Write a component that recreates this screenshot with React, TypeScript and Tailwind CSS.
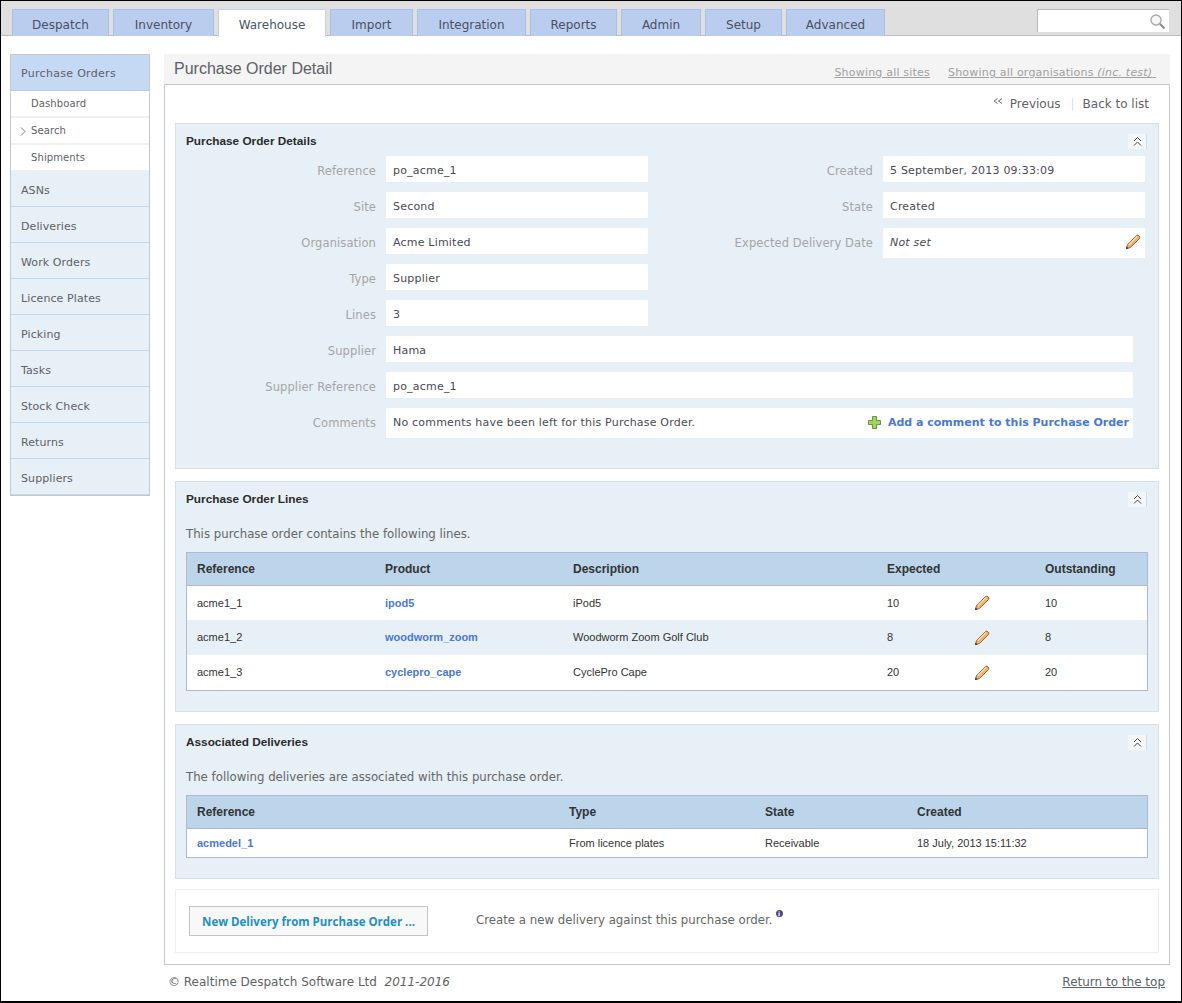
const tabs = [
	{ label: "Despatch", w: "w-[97px]" },
	{ label: "Inventory", w: "w-[101px]" },
	{ label: "Warehouse", w: "w-[108px]", active: true },
	{ label: "Import", w: "w-[83px]" },
	{ label: "Integration", w: "w-[109px]" },
	{ label: "Reports", w: "w-[87px]" },
	{ label: "Admin", w: "w-[80px]" },
	{ label: "Setup", w: "w-[77px]" },
	{ label: "Advanced", w: "w-[99px]" },
];

const sideItems = ["ASNs", "Deliveries", "Work Orders", "Licence Plates", "Picking", "Tasks", "Stock Check", "Returns", "Suppliers"];
const subItems = ["Dashboard", "Search", "Shipments"];

const lines = [
	{ ref: "acme1_1", product: "ipod5", desc: "iPod5", expected: "10", outstanding: "10" },
	{ ref: "acme1_2", product: "woodworm_zoom", desc: "Woodworm Zoom Golf Club", expected: "8", outstanding: "8" },
	{ ref: "acme1_3", product: "cyclepro_cape", desc: "CyclePro Cape", expected: "20", outstanding: "20" },
];

function Pencil() {
	return (
		<svg width="16" height="16" viewBox="0 0 16 16">
			<path d="M1.5 14.5 L2.5 10.5 L11.5 1.5 L13 1 L15 3 L14.5 4.5 L5.5 13.5 Z" fill="#eeb06c" stroke="#a9622a" strokeWidth="1" />
			<path d="M4 10.5 L12 2.5" stroke="#fbdcb4" strokeWidth="1.5" />
			<path d="M1 15 L1.6 12.4 L3.6 14.4 Z" fill="#1b2f80" />
		</svg>
	);
}

function Collapse() {
	return (
		<div className="w-[19px] h-[15px] bg-[#f4f6f8] border-r border-[#d5dde4] flex items-center justify-center">
			<svg width="9" height="11" viewBox="0 0 9 11" fill="none" stroke="#444" strokeWidth="1">
				<path d="M1 5 L4.5 1.5 L8 5" />
				<path d="M1 9.5 L4.5 6 L8 9.5" />
			</svg>
		</div>
	);
}

function Field(props: { label: string; w: string; h?: string; italic?: boolean; children: React.ReactNode }) {
	return (
		<div className="flex items-start">
			<div className="w-[190px] h-[26px] leading-[30px] tracking-[0.1px] text-right text-[#a5a5a5] shrink-0">{props.label}</div>
			<div className={`${props.w} ${props.h || "h-[26px]"} ml-[10px] bg-white pl-[7px] pr-[4px] flex items-start justify-between leading-[29px] text-[#4a4a55] text-[11px] tracking-[0.2px] ${props.italic ? "italic" : ""}`}>
				{props.children}
			</div>
		</div>
	);
}

function SectionHead(props: { title: string }) {
	return (
		<div className="flex items-start justify-between pr-[11px] h-[14px]">
			<h2 className="font-['Liberation_Sans',sans-serif] font-bold text-[11.8px] text-[#2a2a2a] leading-[12px]">{props.title}</h2>
			<div className="-mt-[1px]"><Collapse /></div>
		</div>
	);
}

function Th(props: { children?: React.ReactNode }) {
	return <th className="text-left font-bold text-[12px] text-[#333] pl-[10px] pr-0 pb-0 pt-[1px] h-[32px]">{props.children}</th>;
}

function Td(props: { children?: React.ReactNode }) {
	return <td className="pl-[10px] p-0 text-[#333]">{props.children}</td>;
}

export default function App() {
	return (
		<div className="w-[1182px] h-[1003px] box-border border border-black border-b-2 bg-white overflow-hidden font-['DejaVu_Sans',sans-serif] text-[11.5px] text-[#5f5f66]">
			<header className="h-[35px] bg-[#dfdfdf] border-b border-[#bdbdbd] flex justify-between pl-[11px] pr-[12px]">
				<nav className="flex gap-[4px] pt-[8px]">
					{tabs.map((t) => (
						<div
							key={t.label}
							className={`${t.w} h-[27px] box-border border border-b-0 text-center text-[12px] leading-[31px] ${t.active ? "h-[28px] bg-white border-[#c9d3e6] text-[#4a5568]" : "bg-[#bacdee] border-[#a9bfe6] text-[#4a4f66]"}`}
						>
							{t.label}
						</div>
					))}
				</nav>
				<div className="mt-[8px] w-[132px] h-[23px] box-border bg-white border-l border-t border-[#bbb] flex items-center justify-end pr-[3px]">
					<svg width="17" height="17" viewBox="0 0 17 17" fill="none">
						<circle cx="7" cy="7" r="5" stroke="#a9a9a9" strokeWidth="1.3" fill="#f5f7f5" />
						<path d="M10.8 10.8 L15.5 15.5" stroke="#8f8f8f" strokeWidth="2.2" />
					</svg>
				</div>
			</header>

			<div className="flex items-start pl-[9px] pr-[11px] pt-[18px] gap-[14px]">
				<aside className="w-[140px] h-[442px] box-border border border-[#c8c8c8] shrink-0 text-[11px] tracking-[0.1px]">
					<div className="h-[36px] bg-[#c5d9f5] border-b border-[#b5cbe8] pl-[10px] leading-[38px] tracking-[0.3px]">Purchase Orders</div>
					{subItems.map((s) => (
						<div key={s} className="h-[27px] bg-white border-b-2 border-[#f0f0f0] pl-[20px] text-[10px] leading-[26px] relative">
							{s === "Search" && (
								<svg className="absolute left-[9px] top-[9px]" width="6" height="9" viewBox="0 0 6 9" fill="none" stroke="#777" strokeWidth="1">
									<path d="M1 .5 L5 4.5 L1 8.5" />
								</svg>
							)}
							{s}
						</div>
					))}
					{sideItems.map((s, i) => (
						<div key={s} className={`${i === 0 ? "h-[35px] leading-[38px]" : "h-[36px] leading-[40px]"} box-border bg-[#e7f0f6] border-b border-[#c0d8f0] pl-[10px]`}>{s}</div>
					))}
				</aside>

				<main className="w-[1006px]">
					<div className="h-[30px] bg-[#f4f4f4] flex items-start justify-between pl-[10px] pr-[14px]">
						<h1 className="font-['Liberation_Sans',sans-serif] text-[16px] leading-[30px] text-[#5c6068]">Purchase Order Detail</h1>
						<div className="flex gap-[18px] text-[11px] tracking-[0.2px] text-[#a0a0a0] underline pt-[12px] leading-[14px]">
							<span>Showing all sites</span>
							<span>Showing all organisations <i>(inc. test)</i>&nbsp;</span>
						</div>
					</div>

					<div className="h-[881px] box-border border border-[#c8c8c8] px-[10px]">
						<div className="h-[38px] flex items-start justify-end pr-[10px] pt-[11px] leading-[16px] text-[12px]">
							<svg className="mt-[2px] mr-[7px]" width="10" height="7" viewBox="0 0 10 7" fill="none" stroke="#666" strokeWidth="1">
								<path d="M4.5 .5 L1 3 L4.5 5.5" />
								<path d="M9 .5 L5.5 3 L9 5.5" />
							</svg>
							<span>Previous</span>
							<span className="ml-[10px] mr-[8px] text-[#ddd]">|</span>
							<span>Back to list</span>
						</div>

						<section className="h-[346px] box-border border border-[#d5e0e8] bg-[#e7f0f6] pl-[10px] pt-[11px]">
							<SectionHead title="Purchase Order Details" />
							<div className="mt-[7px] flex flex-col gap-[10px]">
								<div className="flex justify-between pr-[13px]">
									<div className="flex flex-col gap-[10px]">
										<Field label="Reference" w="w-[262px]">po_acme_1</Field>
										<Field label="Site" w="w-[262px]">Second</Field>
										<Field label="Organisation" w="w-[262px]">Acme Limited</Field>
										<Field label="Type" w="w-[262px]">Supplier</Field>
										<Field label="Lines" w="w-[262px]">3</Field>
									</div>
									<div className="flex flex-col gap-[10px]">
										<Field label="Created" w="w-[262px]">5 September, 2013 09:33:09</Field>
										<Field label="State" w="w-[262px]">Created</Field>
										<Field label="Expected Delivery Date" w="w-[262px]" h="h-[30px]" italic>
											<span>Not set</span>
											<span className="mt-[6px]"><Pencil /></span>
										</Field>
									</div>
								</div>
								<Field label="Supplier" w="w-[747px]">Hama</Field>
								<Field label="Supplier Reference" w="w-[747px]">po_acme_1</Field>
								<Field label="Comments" w="w-[747px]" h="h-[30px]">
									<span>No comments have been left for this Purchase Order.</span>
									<span className="flex items-start gap-[7px] font-bold tracking-normal text-[#4a78d6]">
										<svg className="mt-[8px]" width="13" height="13" viewBox="0 0 13 13">
											<path d="M4.5 .5 H8.5 V4.5 H12.5 V8.5 H8.5 V12.5 H4.5 V8.5 H.5 V4.5 H4.5 Z" fill="#a6d35f" stroke="#5f9a45" />
										</svg>
										Add a comment to this Purchase Order
									</span>
								</Field>
							</div>
						</section>

						<section className="h-[231px] mt-[12px] box-border border border-[#d5e0e8] bg-[#e7f0f6] pl-[10px] pt-[11px]">
							<SectionHead title="Purchase Order Lines" />
							<p className="mt-[19px] leading-[16px] text-[11.75px] text-[#666]">This purchase order contains the following lines.</p>
							<div className="mt-[10px] w-[962px] box-border border border-[#b3b7cf] font-['Liberation_Sans',sans-serif] text-[11px]">
								<table className="w-full table-fixed border-collapse">
									<colgroup>
										<col className="w-[188px]" />
										<col className="w-[188px]" />
										<col className="w-[314px]" />
										<col className="w-[88px]" />
										<col className="w-[70px]" />
										<col />
									</colgroup>
									<thead>
										<tr className="bg-[#bcd5eb] border-b border-[#b3b7cf]">
											<Th>Reference</Th>
											<Th>Product</Th>
											<Th>Description</Th>
											<Th>Expected</Th>
											<Th />
											<Th>Outstanding</Th>
										</tr>
									</thead>
									<tbody>
										{lines.map((l, i) => (
											<tr key={l.ref} className={`h-[35px] ${i === 1 ? "bg-[#e7f0f6]" : "bg-white"}`}>
												<Td>{l.ref}</Td>
												<Td><span className="font-bold text-[#4a78d6]">{l.product}</span></Td>
												<Td>{l.desc}</Td>
												<Td>{l.expected}</Td>
												<td className="p-0"><div className="pl-[9px]"><Pencil /></div></td>
												<Td>{l.outstanding}</Td>
											</tr>
										))}
									</tbody>
								</table>
							</div>
						</section>

						<section className="h-[155px] mt-[12px] box-border border border-[#d5e0e8] bg-[#e7f0f6] pl-[10px] pt-[11px]">
							<SectionHead title="Associated Deliveries" />
							<p className="mt-[19px] leading-[16px] text-[11.75px] text-[#666]">The following deliveries are associated with this purchase order.</p>
							<div className="mt-[10px] w-[962px] box-border border border-[#b3b7cf] font-['Liberation_Sans',sans-serif] text-[11px]">
								<table className="w-full table-fixed border-collapse">
									<colgroup>
										<col className="w-[372px]" />
										<col className="w-[196px]" />
										<col className="w-[152px]" />
										<col />
									</colgroup>
									<thead>
										<tr className="bg-[#bcd5eb] border-b border-[#b3b7cf]">
											<Th>Reference</Th>
											<Th>Type</Th>
											<Th>State</Th>
											<Th>Created</Th>
										</tr>
									</thead>
									<tbody>
										<tr className="h-[29px] bg-white">
											<Td><span className="font-bold text-[#4a78d6]">acmedel_1</span></Td>
											<Td>From licence plates</Td>
											<Td>Receivable</Td>
											<Td>18 July, 2013 15:11:32</Td>
										</tr>
									</tbody>
								</table>
							</div>
						</section>

						<section className="h-[64px] mt-[10px] box-border border border-[#eee] pl-[13px] pt-[16px] flex items-start">
							<button className="w-[239px] h-[30px] box-border border border-[#c4c4c4] bg-[#f8f8f8] pt-[1px] font-['Open_Sans',sans-serif] font-bold text-[11.5px] text-[#1f8fc4]">
								New Delivery from Purchase Order ...
							</button>
							<p className="ml-[48px] mt-[6px] text-[11.75px] leading-[16px] text-[#666]">
								Create a new delivery against this purchase order.
							</p>
							<span className="ml-[3px] mt-[4px] w-[7px] h-[7px] rounded-full bg-[#4a4a88] text-white text-[6px] leading-[7px] text-center font-bold">i</span>
						</section>
					</div>

					<div className="flex justify-between pt-[9px] text-[12px] leading-[16px] pl-[4px] pr-[5px]">
						<span>© Realtime Despatch Software Ltd &nbsp;<i>2011-2016</i></span>
						<span className="underline">Return to the top</span>
					</div>
				</main>
			</div>
		</div>
	);
}
